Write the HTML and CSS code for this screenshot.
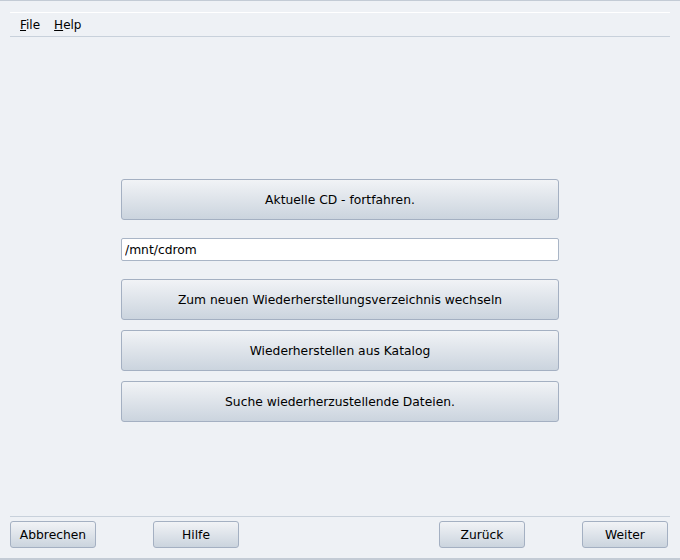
FILE: index.html
```html
<!DOCTYPE html>
<html lang="de">
    <head>
        <meta charset="UTF-8" />
        <meta name="viewport" content="width=device-width, initial-scale=1.0" />
        <title>Wiederherstellung</title>
        <link rel="stylesheet" href="styles.css">
    </head>
    <body>
        <div class="window">
            <div class="menubar">
                <span class="menu"><u>F</u>ile</span>
                <span class="menu"><u>H</u>elp</span>
            </div>
            <div class="content">
                <button class="big">Aktuelle CD - fortfahren.</button>
                <input class="path" type="text" value="/mnt/cdrom" />
                <button class="big">Zum neuen Wiederherstellungsverzeichnis wechseln</button>
                <button class="big">Wiederherstellen aus Katalog</button>
                <button class="big">Suche wiederherzustellende Dateien.</button>
            </div>
            <div class="footer">
                <button class="small">Abbrechen</button>
                <button class="small">Hilfe</button>
                <span class="spacer"></span>
                <button class="small">Zurück</button>
                <button class="small">Weiter</button>
            </div>
        </div>
    </body>
</html>
```

FILE: styles.css
```css
* {
    padding: 0;
    margin: 0;
    box-sizing: border-box;
}
body {
    font-family: "DejaVu Sans", sans-serif;
    font-size: 12.3px;
    color: #000;
    background-color: #eef1f5;
}
.window {
    height: 560px;
    display: flex;
    flex-direction: column;
    border-top: 1px solid #c3cbd5;
    border-bottom: 2px solid #c3cbd5;
}
.menubar {
    margin: 11px 10px 0;
    height: 25px;
    border-top: 1px solid #fff;
    border-bottom: 1px solid #c8d1db;
    display: flex;
    align-items: center;
    padding-left: 10px;
    gap: 14px;
}
.menu {
    font-size: 12px;
}
.content {
    flex: 1;
    display: flex;
    flex-direction: column;
    align-items: center;
    padding-top: 142px;
}
button {
    all: unset;
    box-sizing: border-box;
    display: flex;
    justify-content: center;
    align-items: center;
    font-family: "DejaVu Sans", sans-serif;
    font-size: 12.3px;
    color: #000;
    border: 1px solid #a4b0c2;
    border-radius: 3px;
    background: linear-gradient(#f1f3f6, #cbd4de);
}
.big {
    width: 438px;
    height: 41px;
    margin-bottom: 10px;
}
.big:first-child {
    margin-bottom: 18px;
}
.path {
    width: 438px;
    height: 23px;
    margin-bottom: 18px;
    border: 1px solid #a9b5c6;
    border-radius: 2px;
    background-color: #fff;
    padding: 0 3px;
    font-family: "DejaVu Sans", sans-serif;
    font-size: 12.3px;
    outline: none;
}
.footer {
    margin: 0 10px;
    border-top: 1px solid #c8d1db;
    padding: 4px 2px 10px 0;
    display: flex;
    gap: 57px;
}
.spacer {
    flex: 1;
}
.small {
    width: 86px;
    height: 27px;
}
```
